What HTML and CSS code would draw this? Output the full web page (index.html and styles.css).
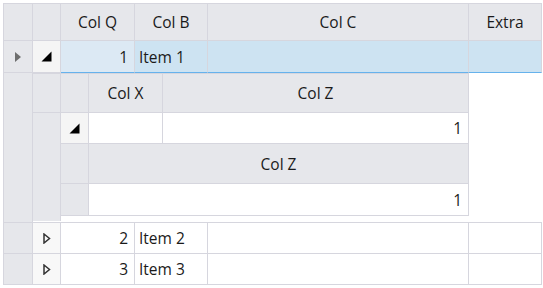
FILE: index.html
```html
<!DOCTYPE html>
<html lang="en">
  <head>
    <meta charset="UTF-8" />
    <meta name="viewport" content="width=device-width, initial-scale=1.0" />
    <title>Master Detail Grid</title>
    <link rel="stylesheet" href="styles.css">
  </head>
  <body>
    <div class="grid master">
      <!-- header -->
      <div class="cell head"></div>
      <div class="cell head"></div>
      <div class="cell head">Col Q</div>
      <div class="cell head">Col B</div>
      <div class="cell head">Col C</div>
      <div class="cell head">Extra</div>

      <!-- row 1 (expanded, selected) -->
      <div class="cell indicator">
        <svg width="8" height="10" viewBox="0 0 8 10"><path d="M1 0 L7 5 L1 10 Z" fill="#6e6e6e"/></svg>
      </div>
      <div class="cell expander">
        <svg width="11" height="11" viewBox="0 0 11 11"><path d="M10.5 0.5 L10.5 10.5 L0.5 10.5 Z" fill="#000"/></svg>
      </div>
      <div class="cell selected focused num">1</div>
      <div class="cell selected">Item 1</div>
      <div class="cell selected"></div>
      <div class="cell selected"></div>

      <!-- detail of row 1 -->
      <div class="cell indicator detail-side"></div>
      <div class="detail">
        <div class="grid nested">
          <div class="cell head"></div>
          <div class="cell head"></div>
          <div class="cell head">Col X</div>
          <div class="cell head">Col Z</div>

          <div class="cell indicator nested-side"></div>
          <div class="cell expander">
            <svg width="11" height="11" viewBox="0 0 11 11"><path d="M10.5 0.5 L10.5 10.5 L0.5 10.5 Z" fill="#000"/></svg>
          </div>
          <div class="cell"></div>
          <div class="cell num">1</div>

          <div class="inner-detail">
            <div class="grid inner">
              <div class="cell head"></div>
              <div class="cell head">Col Z</div>
              <div class="cell indicator"></div>
              <div class="cell num">1</div>
            </div>
          </div>
        </div>
      </div>

      <!-- row 2 -->
      <div class="cell indicator"></div>
      <div class="cell expander closed">
        <svg width="8" height="11" viewBox="0 0 8 11"><path d="M1 1 L6.5 5.5 L1 10 Z" fill="none" stroke="#333" stroke-width="1.5" stroke-linejoin="miter"/></svg>
      </div>
      <div class="cell num">2</div>
      <div class="cell">Item 2</div>
      <div class="cell"></div>
      <div class="cell"></div>

      <!-- row 3 -->
      <div class="cell indicator"></div>
      <div class="cell expander closed">
        <svg width="8" height="11" viewBox="0 0 8 11"><path d="M1 1 L6.5 5.5 L1 10 Z" fill="none" stroke="#333" stroke-width="1.5" stroke-linejoin="miter"/></svg>
      </div>
      <div class="cell num">3</div>
      <div class="cell">Item 3</div>
      <div class="cell"></div>
      <div class="cell"></div>
    </div>
  </body>
</html>
```
FILE: styles.css
```css
body {
  margin: 0;
  background-color: #fff;
  font-family: "Open Sans", "Noto Sans", sans-serif;
  font-size: 15.5px;
  color: #1a1a1a;
}

.grid {
  display: grid;
}

.cell {
  box-sizing: border-box;
  border-right: 1px solid #d6d6de;
  border-bottom: 1px solid #d6d6de;
  background-color: #fff;
  display: flex;
  align-items: center;
  padding: 0 4px;
  white-space: nowrap;
  overflow: hidden;
}

.head {
  background-color: #e6e7eb;
  justify-content: center;
}

.num {
  justify-content: flex-end;
  padding-right: 6px;
}

.indicator {
  background-color: #e6e7eb;
  justify-content: center;
}

.expander {
  background-color: #f5f5f5;
  justify-content: center;
}

.expander.closed {
  background-color: #f8f8f8;
}

.selected {
  background-color: #cde3f2;
  border-bottom-color: #66b2ec;
}

.focused {
  background-color: #dce9f4;
}

/* top level grid */
.master {
  margin: 3px 0 0 3px;
  border-top: 1px solid #d6d6de;
  border-left: 1px solid #d6d6de;
  width: 538px;
  grid-template-columns: 29px 28px 74px 73px 261px 73px;
  grid-template-rows: 37px 32px 150px 31px 31px;
}

.detail-side {
  border-bottom-color: #d6d6de;
}

.detail {
  grid-column: 2 / -1;
  border-bottom: 1px solid #d6d6de;
  background-color: #fff;
}

/* first level detail */
.nested {
  width: 436px;
  border-top: 1px solid #d6d6de;
  grid-template-columns: 28px 28px 74px 306px;
  grid-template-rows: 39px 31px 77px;
}

.nested-side {
  grid-row: 2 / 4;
  border-bottom: none;
}

.inner-detail {
  grid-column: 2 / -1;
  padding-bottom: 5px;
}

/* second level detail */
.inner {
  grid-template-columns: 28px 380px;
  grid-template-rows: 40px 32px;
}
```
